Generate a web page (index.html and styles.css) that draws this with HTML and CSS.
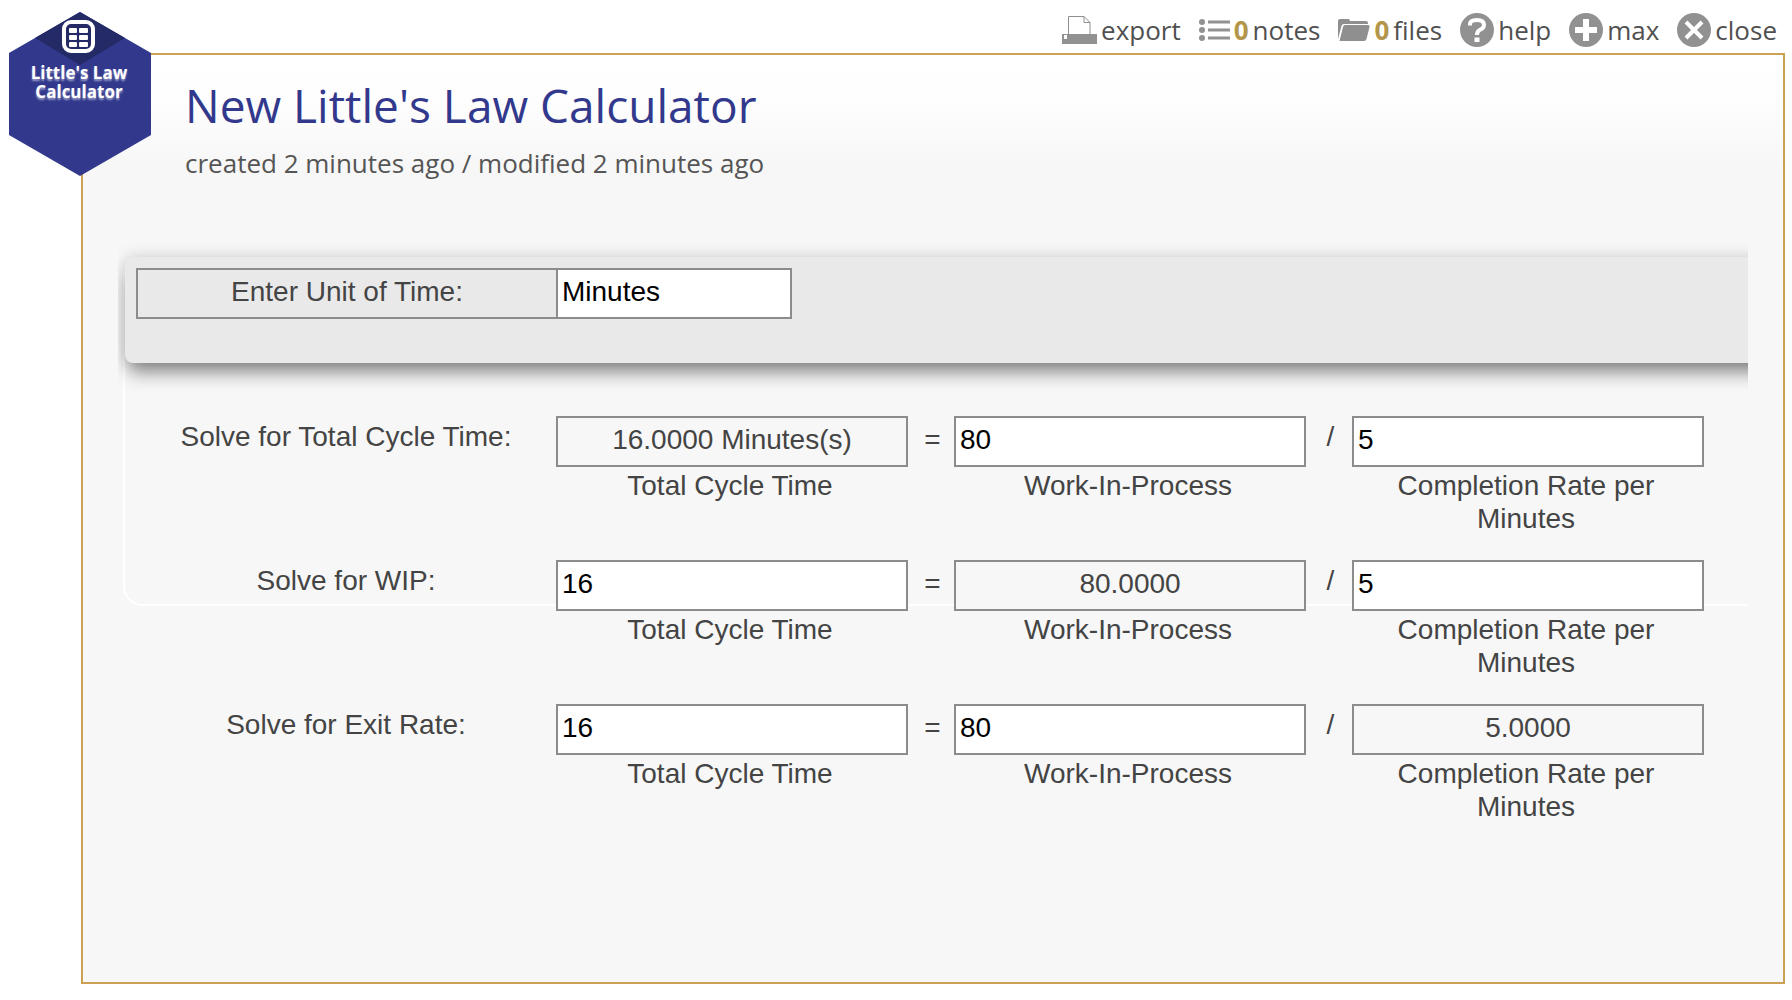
FILE: index.html
```html
<!DOCTYPE html>
<html lang="en">
<head>
<meta charset="utf-8">
<meta name="viewport" content="width=device-width, initial-scale=1">
<title>Little's Law Calculator</title>
<link rel="stylesheet" href="styles.css">
</head>
<body>
<nav class="toolbar" aria-label="Tool actions">
  <button class="action" type="button">
    <svg width="35" height="30" viewBox="0 0 35 30"><path d="M6.500 19V1.500H22l6 6V19" fill="#fff" stroke="#8f8f8f"/><path d="M22 1.500v6h6" fill="none" stroke="#8f8f8f"/><path d="M0 19h35v10H0z" fill="#919191"/><path d="M2 20h3v4H2z" fill="#fff"/></svg>
    <span>export</span>
  </button>
  <button class="action" type="button">
    <svg width="31" height="24" viewBox="0 0 31 24" fill="#919191"><circle cx="3" cy="4" r="3"/><circle cx="3" cy="12" r="3"/><circle cx="3" cy="20" r="3"/><path d="M9 2.500h22v3H9zM9 10.500h22v3H9zM9 18.500h22v3H9z"/></svg>
    <b class="count">0</b>
    <span>notes</span>
  </button>
  <button class="action" type="button">
    <svg width="32" height="22" viewBox="0 0 32 22" fill="#8f8f8f"><path d="M0 20V2q0-2 2-2h8q2 0 2 2h16q2 0 2 2v1H6q-2 0-2.500 2z"/><path d="M7 6h23q2 0 1.500 2l-3 12q-.500 2-2.500 2H1.500L5 8q.500-2 2-2z"/></svg>
    <b class="count">0</b>
    <span>files</span>
  </button>
  <button class="action" type="button">
    <svg width="34" height="34" viewBox="0 0 34 34"><circle cx="17" cy="17" r="17" fill="#919191"/><path d="M10 12.500V11q0-4 7-4t7 5q0 3-3.500 4.500-3.500 1.500-3.500 5.500" fill="none" stroke="#fff" stroke-width="4"/><path d="M14.500 24.500h5v4.500h-5z" fill="#fff"/></svg>
    <span>help</span>
  </button>
  <button class="action" type="button">
    <svg width="34" height="34" viewBox="0 0 34 34"><circle cx="17" cy="17" r="17" fill="#919191"/><path d="M17 6v22M6 17h22" stroke="#fff" stroke-width="6"/></svg>
    <span>max</span>
  </button>
  <button class="action" type="button">
    <svg width="34" height="34" viewBox="0 0 34 34"><circle cx="17" cy="17" r="17" fill="#919191"/><path d="M9 9l16 16M25 9L9 25" stroke="#fff" stroke-width="4"/></svg>
    <span>close</span>
  </button>
</nav>

<main class="panel">
  <div class="badge">
    <svg class="badge-shape" viewBox="0 0 142 164" aria-hidden="true">
      <path d="M71 0l71 41v82l-71 41L0 123V41z" fill="#32398d"/>
      <path d="M71 0l45 26-45 27-45-27z" fill="#242a66"/>
      <rect x="55" y="10" width="29" height="29" rx="7" fill="none" stroke="#fff" stroke-width="4"/>
      <g fill="#fff"><rect x="60" y="16" width="8" height="5" rx="1"/><rect x="70" y="16" width="9" height="5" rx="1"/><rect x="60" y="23" width="8" height="5" rx="1"/><rect x="70" y="23" width="9" height="5" rx="1"/><rect x="60" y="30" width="8" height="5" rx="1"/><rect x="70" y="30" width="9" height="5" rx="1"/></g>
    </svg>
    <span class="badge-name">Little's Law<br>Calculator</span>
  </div>

  <header class="heading">
    <h1>New Little's Law Calculator</h1>
    <p>created 2 minutes ago / modified 2 minutes ago</p>
  </header>

  <form class="workspace">
    <div class="frame"></div>
    <div class="unit-bar">
      <div class="unit">
        <label for="unit">Enter Unit of Time:</label>
        <input class="box" id="unit" type="text" value="Minutes">
      </div>
    </div>

    <div class="equations">
      <div class="equation">
        <span class="solve">Solve for Total Cycle Time:</span>
        <div class="term"><output class="box" id="t1">16.0000 Minutes(s)</output><label for="t1">Total Cycle Time</label></div>
        <span class="equals">=</span>
        <div class="term"><input class="box" id="w1" type="text" value="80"><label for="w1">Work-In-Process</label></div>
        <span class="slash">/</span>
        <div class="term"><input class="box" id="r1" type="text" value="5"><label for="r1">Completion Rate per Minutes</label></div>
      </div>
      <div class="equation">
        <span class="solve">Solve for WIP:</span>
        <div class="term"><input class="box" id="t2" type="text" value="16"><label for="t2">Total Cycle Time</label></div>
        <span class="equals">=</span>
        <div class="term"><output class="box" id="w2">80.0000</output><label for="w2">Work-In-Process</label></div>
        <span class="slash">/</span>
        <div class="term"><input class="box" id="r2" type="text" value="5"><label for="r2">Completion Rate per Minutes</label></div>
      </div>
      <div class="equation">
        <span class="solve">Solve for Exit Rate:</span>
        <div class="term"><input class="box" id="t3" type="text" value="16"><label for="t3">Total Cycle Time</label></div>
        <span class="equals">=</span>
        <div class="term"><input class="box" id="w3" type="text" value="80"><label for="w3">Work-In-Process</label></div>
        <span class="slash">/</span>
        <div class="term"><output class="box" id="r3">5.0000</output><label for="r3">Completion Rate per Minutes</label></div>
      </div>
    </div>
  </form>
</main>
</body>
</html>
```
FILE: styles.css
```css
* {
  box-sizing: border-box;
}

body {
  margin: 0;
  min-height: 100vh;
  display: flex;
  flex-direction: column;
  padding: 0 7px 16px 81px;
  background: #fff;
  color: #444;
  font: 28px/33px "Liberation Sans", Arial, sans-serif;
}

.toolbar {
  display: flex;
  justify-content: flex-end;
  align-items: center;
  gap: 18px;
  height: 53px;
  padding: 6px 8px 0 0;
}

.action {
  display: flex;
  align-items: center;
  gap: 4px;
  height: 40px;
  padding: 0;
  border: 0;
  background: none;
  color: #505050;
  font: 26px/36px "Open Sans", sans-serif;
  cursor: pointer;
}

.action svg {
  flex: none;
}

.count {
  color: #b3964a;
}

.panel {
  position: relative;
  flex: 1;
  padding: 0 35px 80px;
  border: 2px solid #cba254;
  background: linear-gradient(#fff 0, #fefefe 40px, #f7f7f7 110px);
}

.badge {
  position: absolute;
  left: -74px;
  top: -43px;
  width: 142px;
}

.badge-shape {
  display: block;
  width: 100%;
}

.badge-name {
  position: absolute;
  inset: 51px 0 auto 0;
  padding-right: 2px;
  color: #fff;
  font: bold 17px/19px "Open Sans", sans-serif;
  text-align: center;
  text-shadow: 0 2px 2px rgba(255, 255, 255, 0.5);
}

.heading {
  padding: 18px 0 0 67px;
  font-family: "Open Sans", sans-serif;
}

.heading h1 {
  margin: 0;
  color: #32398d;
  font-size: 46px;
  font-weight: 400;
  line-height: 64px;
}

.heading p {
  margin: 8px 0 0;
  color: #555;
  font-size: 26px;
  line-height: 36px;
}

.workspace {
  position: relative;
  margin-top: 56px;
  padding: 20px 0 0 7px;
  overflow: hidden;
}

.frame {
  position: absolute;
  inset: 20px -40px auto 5px;
  height: 349px;
  border: 2px solid #fff;
  border-radius: 20px;
}

.unit-bar {
  position: relative;
  height: 106px;
  margin-right: -40px;
  padding: 11px;
  border-radius: 8px;
  background: #e9e9e9;
  box-shadow: 0 0 16px rgba(0, 0, 0, 0.18), 0 14px 18px -4px rgba(0, 0, 0, 0.4);
}

.unit {
  display: grid;
  grid-template-columns: 420px 236px;
}

.unit label {
  height: 51px;
  margin-right: -2px;
  padding: 5px 0;
  border: 2px solid #8c8c8c;
  text-align: center;
}

.box {
  display: block;
  width: 100%;
  height: 51px;
  padding: 0 4px 4px;
  border: 2px solid #8c8c8c;
  border-radius: 0;
  color: #444;
  font: inherit;
  line-height: 43px;
  text-align: center;
}

input.box {
  background: #fff;
  color: #000;
  text-align: left;
}

.equations {
  position: relative;
  display: grid;
  gap: 25px;
  padding: 53px 44px 0 11px;
}

.equation {
  display: grid;
  grid-template-columns: 420fr 352fr 46px 352fr 46px 352fr;
  text-align: center;
}

output.box {
  background: #f7f7f7;
}

.term label {
  display: block;
  padding: 2px 42px 0 38px;
}

.solve {
  padding-top: 4px;
}

.slash {
  padding: 4px 0 0 3px;
}

.equals {
  padding: 7px 0 0 3px;
}
```
